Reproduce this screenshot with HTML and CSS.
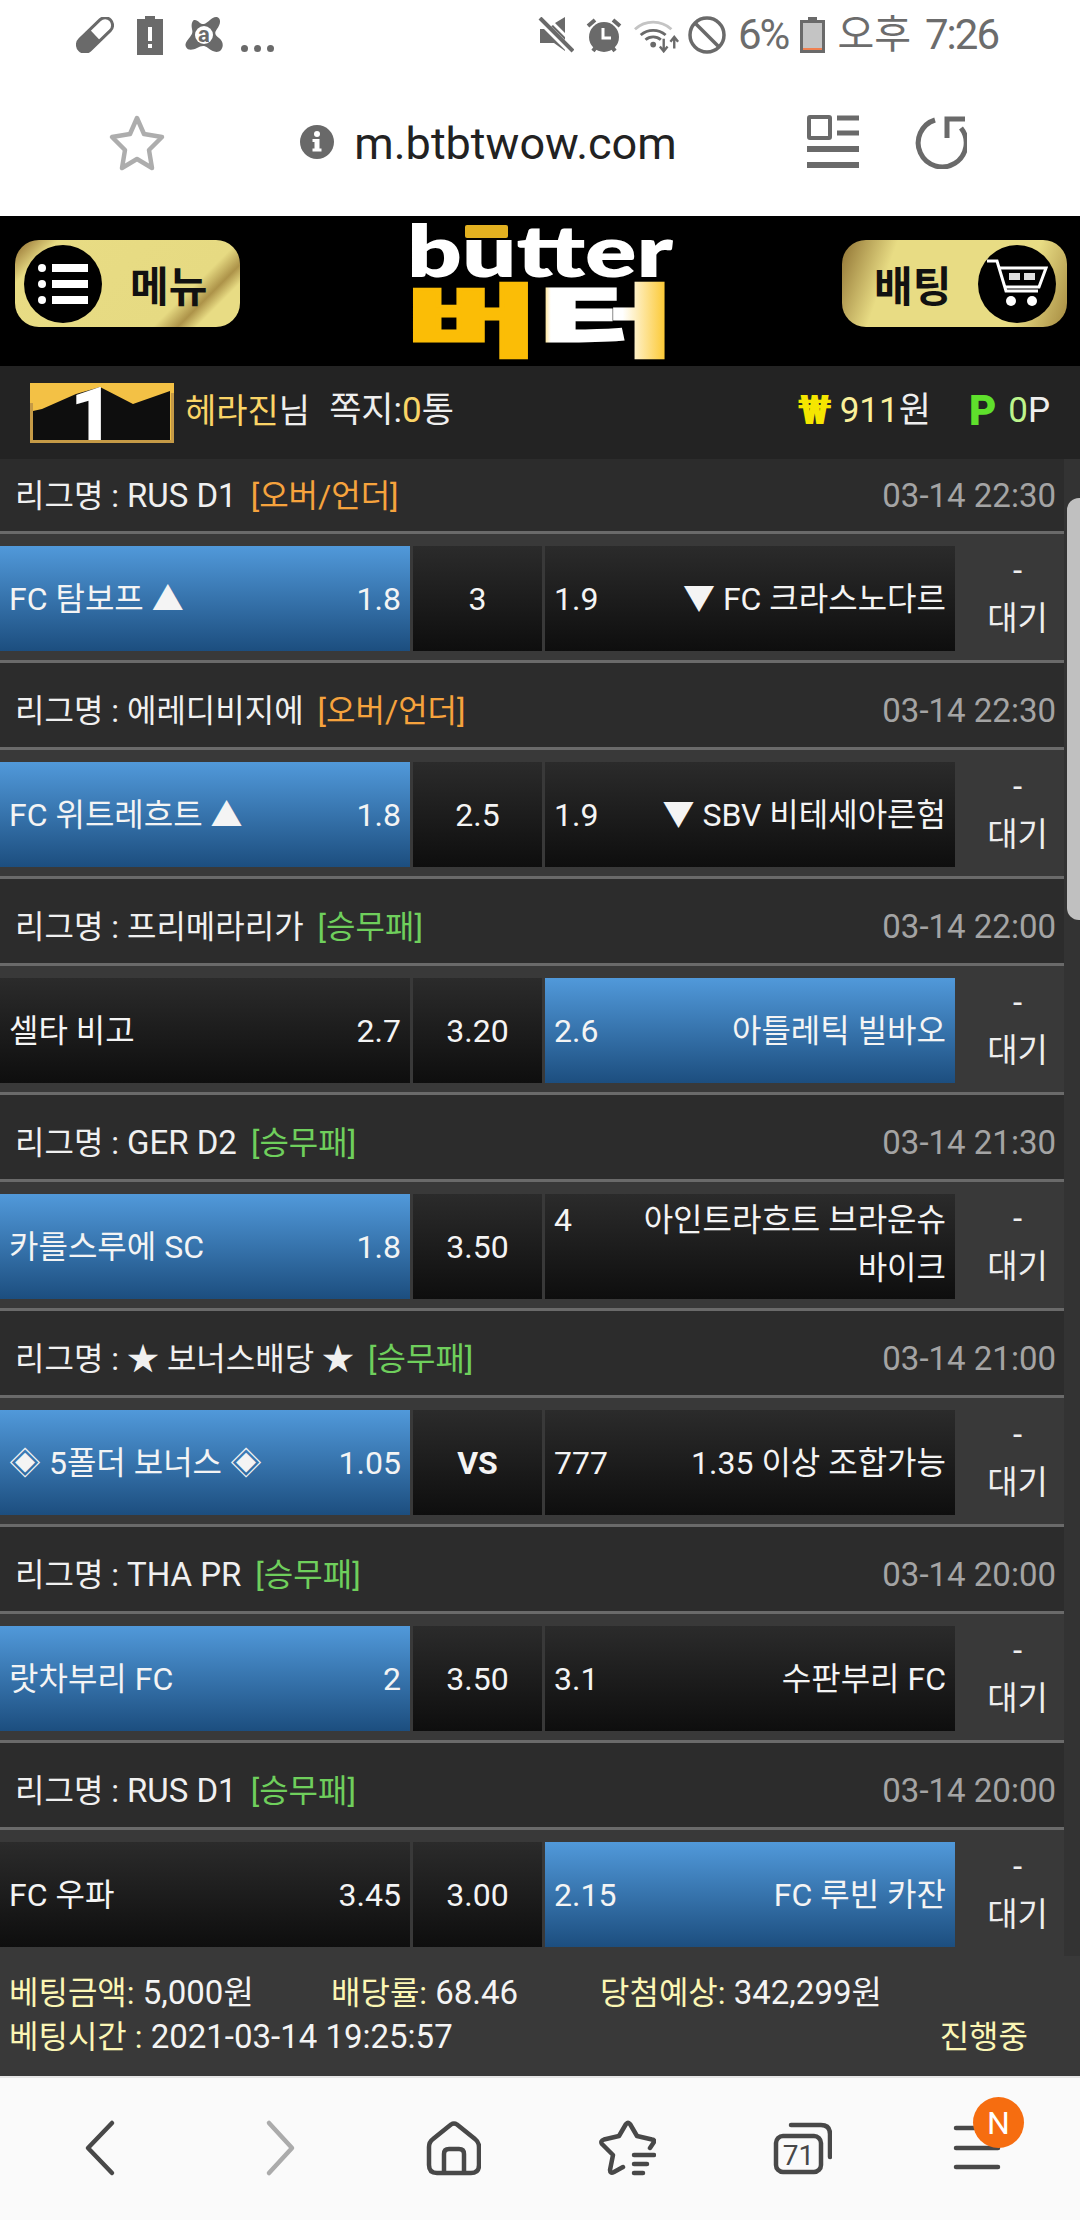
FILE: index.html
```html
<!DOCTYPE html>
<html lang="ko">
<head>
  <meta charset="UTF-8">
  <title>butter</title>
  <link rel="stylesheet" href="styles.css">
</head>
<body>
<div class="page">

  <!-- phone status bar -->
  <div class="statusbar">
    <div class="status-left">
      <svg class="ic-pill" width="38" height="36" viewBox="0 0 38 36"><g transform="rotate(-44 19 18)"><rect x="-2.500" y="10.500" width="43" height="15" rx="7.500" fill="#fff" stroke="#6a6a6a" stroke-width="3"/><path d="M19 10.500H5a7.500 7.500 0 0 0 0 15h14z" fill="#6a6a6a"/></g></svg>
      <svg class="ic-warn" width="26" height="40" viewBox="0 0 26 40"><path d="M8 1h10v3h8v36H0V4h8z" fill="#6a6a6a"/><rect x="11" y="12" width="4" height="14" fill="#fff"/><rect x="11" y="29" width="4" height="4" fill="#fff"/></svg>
      <svg class="ic-avast" width="38" height="38" viewBox="0 0 38 38"><path d="M9 4c4-1 6 5 10 4s8-8 13-7c5 2 3 8 0 12s-2 6 2 9 5 8 2 12c-4 4-9 1-13-2s-7-2-11 0-9 3-11-1 2-7 4-10 3-4 2-8 0-8 2-9z" fill="#6a6a6a"/><circle cx="19" cy="19" r="9" fill="#fff"/><text x="19" y="26" class="avast-a">a</text></svg>
      <span class="status-dots"><i></i><i></i><i></i></span>
    </div>
    <div class="status-right">
      <svg width="36" height="36" viewBox="0 0 36 36"><path d="M2 12h7l6-4 12 12v14l-11-8H2zM17 6l10-6v16z" fill="#6a6a6a"/><path d="M1 2l33 33" stroke="#fff" stroke-width="7"/><path d="M2 1l33 33" stroke="#6a6a6a" stroke-width="4"/></svg>
      <svg width="36" height="36" viewBox="0 0 36 36"><circle cx="18" cy="20" r="15" fill="#6a6a6a"/><path d="M2 9l7-6M34 9l-7-6M7 34l3-4M29 34l-3-4" stroke="#6a6a6a" stroke-width="4"/><path d="M17 11v10h8" fill="none" stroke="#fff" stroke-width="3"/></svg>
      <svg width="46" height="36" viewBox="0 0 48 36"><path d="M1 12a28 28 0 0 1 38 0" fill="none" stroke="#c4c4c4" stroke-width="3"/><path d="M7 18a20 20 0 0 1 26 0M12 23a12 12 0 0 1 16 0" fill="none" stroke="#6a6a6a" stroke-width="3"/><circle cx="20" cy="28" r="3" fill="#6a6a6a"/><path d="M31 22v12M27 30l4 5 4-5M42 32V21M38 25l4-5 4 5" fill="none" stroke="#6a6a6a" stroke-width="2.500"/></svg>
      <svg class="ic-block" width="38" height="38" viewBox="0 0 38 38"><circle cx="19" cy="19" r="17" fill="none" stroke="#6a6a6a" stroke-width="3.500"/><path d="M7 7l24 24" stroke="#6a6a6a" stroke-width="3.500"/></svg>
      <span class="status-text">6%</span>
      <svg width="25" height="36" viewBox="0 0 25 36"><path d="M8 0h9v3h8v33H0V3h8z" fill="#6a6a6a"/><rect x="3" y="6" width="19" height="27" fill="#c4c4c4"/><rect x="3" y="31" width="19" height="2" fill="#f08050"/></svg>
      <span class="status-clock"><span class="status-ko">오후</span><span class="status-text">7:26</span></span>
    </div>
  </div>

  <!-- browser address bar -->
  <div class="addressbar">
    <svg class="ic-fav" width="60" height="60" viewBox="0 0 60 60"><path d="M30 6l7 16 18 3-13 13 3 18-15-9-15 9 3-18L5 25l18-3z" fill="none" stroke="#adadad" stroke-width="4.500" stroke-linejoin="round"/></svg>
    <div class="url">
      <svg width="34" height="34" viewBox="0 0 34 34"><circle cx="17" cy="17" r="17" fill="#696969"/><rect x="14.500" y="14" width="5" height="12" fill="#fff"/><rect x="12.500" y="14" width="4" height="3" fill="#fff"/><rect x="12.500" y="23.500" width="9" height="3" fill="#fff"/><circle cx="17" cy="9" r="3" fill="#fff"/></svg>
      <span>m.btbtwow.com</span>
    </div>
    <svg class="ic-reader" width="52" height="54" viewBox="0 0 52 54"><rect x="2" y="2" width="21" height="21" rx="1" fill="none" stroke="#6a6a6a" stroke-width="4"/><path d="M30 3h22M30 18h22" stroke="#6a6a6a" stroke-width="5"/><path d="M0 34h52M0 50h52" stroke="#6a6a6a" stroke-width="6"/></svg>
    <svg class="ic-reload" width="54" height="54" viewBox="0 0 54 54"><path d="M22 5A24 24 0 1 0 48 13" fill="none" stroke="#6a6a6a" stroke-width="5"/><path d="M52 4H34v19" fill="none" stroke="#6a6a6a" stroke-width="5"/></svg>
  </div>

  <!-- site header -->
  <header class="site-head">
    <a class="gold-btn gold-menu">
      <span class="gold-circle">
        <svg width="52" height="44" viewBox="0 0 52 44"><g fill="#fff"><circle cx="5" cy="6" r="4"/><circle cx="5" cy="22" r="4"/><circle cx="5" cy="38" r="4"/><rect x="15" y="2" width="36" height="8"/><rect x="15" y="18" width="36" height="8"/><rect x="15" y="34" width="36" height="8"/></g></svg>
      </span>
      <span class="gold-label">메뉴</span>
    </a>
    <svg class="logo" width="262" height="134" viewBox="0 0 262 134">
      <defs>
        <linearGradient id="fade" x1="0" x2="1" y1="0" y2="0">
          <stop offset="0" stop-color="#fbbd06"/><stop offset=".1" stop-color="#fff"/><stop offset=".62" stop-color="#fff"/><stop offset="1" stop-color="#fbbd06"/>
        </linearGradient>
      </defs>
      <rect x="55" y="0" width="43" height="13" rx="2" fill="#e3b120"/>
      <text class="logo-en" x="-3" y="52" textLength="266" lengthAdjust="spacingAndGlyphs">butter</text>
      <text class="logo-ko" x="-4" y="125" textLength="132" lengthAdjust="spacingAndGlyphs" fill="#fbbd06" stroke="#fbbd06">버</text>
      <text class="logo-ko" x="127" y="125" textLength="138" lengthAdjust="spacingAndGlyphs" fill="url(#fade)" stroke="url(#fade)">터</text>
    </svg>
    <a class="gold-btn gold-bet">
      <span class="gold-label">배팅</span>
      <span class="gold-circle">
        <svg width="62" height="50" viewBox="0 0 62 50"><path d="M1 2h10l9 30h32" fill="none" stroke="#fff" stroke-width="3"/><path d="M13 9h47l-7 19H19" fill="none" stroke="#fff" stroke-width="3"/><rect x="23" y="14" width="11" height="7" fill="#ddd"/><rect x="38" y="14" width="11" height="7" fill="#ddd"/><circle cx="25" cy="42" r="5" fill="#fff"/><circle cx="46" cy="42" r="5" fill="#fff"/></svg>
      </span>
    </a>
  </header>

  <!-- member info -->
  <div class="userbar">
    <svg class="rank" width="144" height="60" viewBox="0 0 144 60"><rect width="144" height="60" fill="#f3c145"/><path d="M3 28l9-2 34-15 24-7 33 17 37-13v49H3z" fill="#0e0e0e"/><path d="M1.500 20V58.500H142.500V10" fill="none" stroke="#c59a46" stroke-width="3"/><text x="62" y="57" class="rank-num">1</text></svg>
    <span class="userbar-name"><b class="y">헤라진</b>님</span>
    <span class="userbar-msg">쪽지:<b class="y">0</b>통</span>
    <span class="userbar-money"><b class="won">₩</b><b class="pale">911</b>원</span>
    <span class="userbar-point"><b class="pt">P</b><b class="lime">0</b>P</span>
  </div>

  <!-- bet list -->
  <div class="betlist">

    <div class="league first"><span>리그명 : <b class="en">RUS D1</b><em class="orange">[오버/언더]</em></span><time>03-14 22:30</time></div>
    <div class="match">
      <div class="cell blue"><span>FC 탐보프 ▲</span><span>1.8</span></div>
      <div class="cell mid dark">3</div>
      <div class="cell dark"><span>1.9</span><span>▼ FC 크라스노다르</span></div>
      <div class="state">-<br>대기</div>
    </div>

    <div class="league"><span>리그명 : 에레디비지에<em class="orange">[오버/언더]</em></span><time>03-14 22:30</time></div>
    <div class="match">
      <div class="cell blue"><span>FC 위트레흐트 ▲</span><span>1.8</span></div>
      <div class="cell mid dark">2.5</div>
      <div class="cell dark"><span>1.9</span><span>▼ SBV 비테세아른험</span></div>
      <div class="state">-<br>대기</div>
    </div>

    <div class="league"><span>리그명 : 프리메라리가<em class="green">[승무패]</em></span><time>03-14 22:00</time></div>
    <div class="match">
      <div class="cell dark"><span>셀타 비고</span><span>2.7</span></div>
      <div class="cell mid dark">3.20</div>
      <div class="cell blue"><span>2.6</span><span>아틀레틱 빌바오</span></div>
      <div class="state">-<br>대기</div>
    </div>

    <div class="league"><span>리그명 : <b class="en">GER D2</b><em class="green">[승무패]</em></span><time>03-14 21:30</time></div>
    <div class="match">
      <div class="cell blue"><span>카를스루에 SC</span><span>1.8</span></div>
      <div class="cell mid dark">3.50</div>
      <div class="cell dark two-line"><span>4</span><span class="team-r">아인트라흐트 브라운슈<br>바이크</span></div>
      <div class="state">-<br>대기</div>
    </div>

    <div class="league"><span>리그명 : ★ 보너스배당 ★<em class="green">[승무패]</em></span><time>03-14 21:00</time></div>
    <div class="match">
      <div class="cell blue"><span>◈ 5폴더 보너스 ◈</span><span>1.05</span></div>
      <div class="cell mid dark"><b>VS</b></div>
      <div class="cell dark"><span>777</span><span>1.35 이상 조합가능</span></div>
      <div class="state">-<br>대기</div>
    </div>

    <div class="league"><span>리그명 : <b class="en">THA PR</b><em class="green">[승무패]</em></span><time>03-14 20:00</time></div>
    <div class="match">
      <div class="cell blue"><span>랏차부리 FC</span><span>2</span></div>
      <div class="cell mid dark">3.50</div>
      <div class="cell dark"><span>3.1</span><span>수판부리 FC</span></div>
      <div class="state">-<br>대기</div>
    </div>

    <div class="league"><span>리그명 : <b class="en">RUS D1</b><em class="green">[승무패]</em></span><time>03-14 20:00</time></div>
    <div class="match last">
      <div class="cell dark"><span>FC 우파</span><span>3.45</span></div>
      <div class="cell mid dark">3.00</div>
      <div class="cell blue"><span>2.15</span><span>FC 루빈 카잔</span></div>
      <div class="state">-<br>대기</div>
    </div>

    <div class="summary">
      <div class="summary-row">
        <span class="sum-amount"><b>베팅금액:</b> 5,000원</span>
        <span class="sum-rate"><b>배당률:</b> 68.46</span>
        <span class="sum-win"><b>당첨예상:</b> 342,299원</span>
      </div>
      <div class="summary-row between">
        <span><b>베팅시간 :</b> 2021-03-14 19:25:57</span>
        <b class="sum-state">진행중</b>
      </div>
    </div>
  </div>

  <div class="scroll-thumb"></div>

  <!-- browser toolbar -->
  <nav class="toolbar">
    <svg width="60" height="60" viewBox="0 0 60 60"><path d="M42 5L18 30l24 25" class="tool-line"/></svg>
    <svg width="60" height="60" viewBox="0 0 60 60"><path d="M24 5l23 25-23 25" class="tool-line off"/></svg>
    <svg width="60" height="60" viewBox="0 0 60 60"><path d="M30 6.500Q33 4.500 36 6.500L54 21Q58 24 58 29V47Q58 55 50 55H16Q8 55 8 47V29Q8 24 12 21ZM23 55V36Q23 31 28 31H38Q43 31 43 36V55" class="tool-line"/></svg>
    <svg width="60" height="60" viewBox="0 0 60 60"><path d="M54 30L58 24Q59 22 56 21.500L41 18L34 6Q32 4 30 6L23 18L8 21.500Q4 23 6 26L17 37L14 52Q14 56 18 54L27 49M38 37H58M38 46H51M38 55H47" class="tool-line"/></svg>
    <svg width="60" height="60" viewBox="0 0 60 60"><rect x="4" y="18" width="45" height="36" rx="7" class="tool-line"/><path d="M19 7H49Q58 7 58 16V39" class="tool-line"/><text x="26.500" y="47" class="tab-count">71</text></svg>
    <div class="tool-menu">
      <svg width="60" height="60" viewBox="0 0 60 60"><path d="M9 10H51M9 30H51M9 49H51" class="tool-line"/></svg>
      <span class="badge">N</span>
    </div>
  </nav>
</div>
</body>
</html>
```
FILE: styles.css
```css
* { box-sizing: border-box; }
html, body { margin: 0; padding: 0; }
body { font-family: Roboto, "Noto Sans CJK KR", sans-serif; background: #fff; }
b, em { font-weight: normal; font-style: normal; }
.page { position: relative; width: 1080px; height: 2220px; overflow: hidden; display: flex; flex-direction: column; }

/* status bar */
.statusbar { height: 70px; display: flex; justify-content: space-between; align-items: center; padding: 0 82px 0 76px; background: #fff; }
.status-left { display: flex; align-items: center; }
.status-right { display: flex; align-items: center; gap: 12px; }
.ic-pill { margin-right: 23px; }
.ic-warn { margin-right: 22px; }
.ic-avast { margin-right: 18px; }
.ic-block { margin-left: -4px; }
.avast-a { font: bold 22px Roboto, sans-serif; fill: #6a6a6a; text-anchor: middle; }
.status-dots { display: flex; gap: 6px; padding-top: 26px; }
.status-dots i { width: 7px; height: 7px; border-radius: 50%; background: #6a6a6a; }
.status-text { font-size: 42px; letter-spacing: -2px; color: #6c6c6c; line-height: 44px; }
.status-clock { display: flex; align-items: center; gap: 14px; }
.status-ko { font-size: 40px; color: #6c6c6c; line-height: 44px; }

/* address bar */
.addressbar { height: 146px; display: flex; align-items: center; background: #fff; padding: 0 113px 2px 107px; }
.url { flex: 1; display: flex; align-items: center; justify-content: center; gap: 20px; padding-left: 3px; }
.url span { font-size: 45px; line-height: 52px; color: #222; padding-top: 4px; }
.ic-reader { margin-right: 54px; }

/* site header */
.site-head { height: 150px; background: #000; display: flex; justify-content: space-between; align-items: flex-start; padding: 24px 13px 0 15px; }
.gold-btn { width: 225px; height: 87px; border-radius: 24px; display: flex; align-items: center; }
.gold-menu { padding-left: 9px; gap: 28px; background: linear-gradient(135deg, #8a6428 0, #e8dc84 14%, #e6da82 72%, #ad9349 80%, #e8dc84 86%); }
.gold-bet { padding-left: 32px; gap: 27px; background: linear-gradient(110deg, #8f7233 0, #e8dc84 22%, #e8dc84 78%, #a58a40 100%); }
.gold-circle { width: 78px; height: 78px; border-radius: 50%; background: #000; display: flex; align-items: center; justify-content: center; flex: none; }
.gold-label { font-size: 42px; font-weight: bold; color: #111; white-space: nowrap; }
.logo { margin-top: -15px; overflow: visible; }
.logo-en { font: 800 72px Lato, Inter, sans-serif; fill: #fff; }
.logo-ko { font: 900 78px "Noto Sans CJK KR", sans-serif; stroke-width: 3px; }

/* member info */
.userbar { height: 93px; background: #232323; display: flex; align-items: center; padding: 0 30px 4px 30px; color: #eee; font-size: 34px; line-height: 44px; }
.rank { flex: none; margin: 4px 11px 0 0; overflow: visible; }
.rank-num { font: 900 75px Roboto, sans-serif; fill: #fff; text-anchor: middle; }
.y { color: #fad466; }
.pale { color: #fbf09a; }
.lime { color: #bdf58c; }
.userbar-msg { margin-left: 19px; font-size: 35px; }
.userbar-money { margin-left: auto; display: flex; align-items: center; font-size: 35px; }
.won { color: #f5e600; font-weight: 900; font-size: 40px; margin-right: 8px; }
.userbar-point { margin-left: 38px; display: flex; align-items: center; font-size: 35px; }
.pt { color: #5fe02c; font-weight: 900; font-size: 42px; margin-right: 12px; }

/* list */
.betlist { flex: 1; display: flex; flex-direction: column; background: #333; font-size: 32px; color: #f0f0f0; }
.league { width: 1064px; height: 87px; padding: 12px 8px 0 15px; display: flex; justify-content: space-between; align-items: center; background: #2c2c2c; border-bottom: 3px solid #6a6a6a; line-height: 44px; }
.league.first { height: 75px; padding-top: 2px; }
.league em { margin-left: 14px; }
.league time { color: #a4a4a4; font-size: 33px; }
.en { font-size: 33px; }
.orange { color: #f6a33d; }
.green { color: #6fcf5c; }

.match { width: 1064px; height: 129px; padding: 12px 0 9px; background: #393939; border-bottom: 3px solid #6a6a6a; display: grid; grid-template-columns: 410px 129px 410px 106px; column-gap: 3px; }
.match.last { height: 126px; border-bottom: 0; }
.cell { display: flex; justify-content: space-between; align-items: center; padding: 0 9px; color: #f4f4f4; line-height: 48px; }
.cell.mid { justify-content: center; }
.cell.mid b { font-weight: bold; }
.blue { background: linear-gradient(#5199da, #1c4e7f); }
.dark { background: linear-gradient(#2b2b2b, #0e0e0e); }
.two-line { align-items: flex-start; padding-top: 2px; }
.two-line .team-r { text-align: right; }
.state { text-align: center; font-size: 33px; line-height: 48px; padding-left: 13px; margin-top: 1px; color: #eee; white-space: nowrap; }

.summary { flex: 1; background: #393939; padding: 15px 0 0 9px; width: 1080px; font-size: 33px; line-height: 44px; color: #f4f4f4; }
.summary-row { display: flex; }
.summary b { color: #fbf6b4; font-size: 32px; }
.between { justify-content: space-between; padding-right: 52px; }
.sum-amount { width: 322px; }
.sum-rate { width: 269px; }

.scroll-thumb { position: absolute; left: 1067px; top: 498px; width: 13px; height: 422px; background: #c0c0c0; border-top-left-radius: 12px; border-bottom-left-radius: 12px; }

/* toolbar */
.toolbar { height: 144px; background: #fafafa; border-top: 2px solid #e6e6e6; display: flex; justify-content: space-between; align-items: center; padding: 0 73px 2px 70px; }
.tool-line { fill: none; stroke: #484848; stroke-width: 4.500; stroke-linecap: round; stroke-linejoin: round; }
.tool-line.off { stroke: #ababab; }
.tab-count { font: 28px Roboto, sans-serif; fill: #484848; text-anchor: middle; }
.tool-menu { position: relative; width: 60px; height: 60px; }
.badge { position: absolute; left: 26px; top: -21px; width: 51px; height: 51px; border-radius: 50%; background: #f66d10; color: #fff; font-size: 32px; display: flex; align-items: center; justify-content: center; }
```
